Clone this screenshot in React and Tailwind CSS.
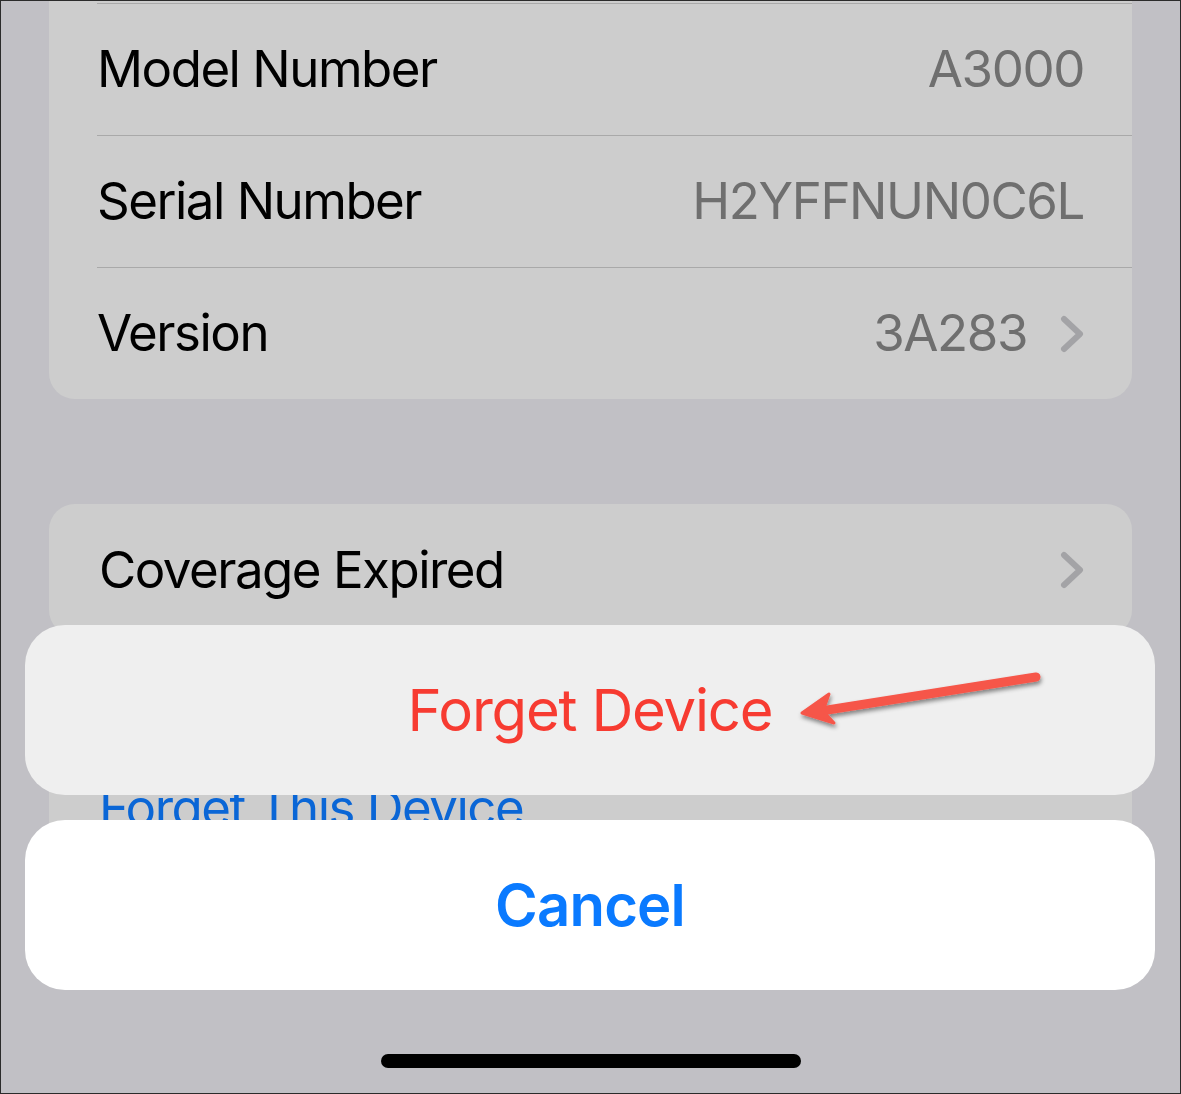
import React from 'react'

const font = { fontFamily: 'Inter, "Noto Sans", sans-serif' }

const Chevron = () => (
  <svg width="24" height="38" viewBox="0 0 24 38" className="shrink-0">
    <polyline
      points="4,4 20,19 4,34"
      fill="none"
      stroke="#a3a3a6"
      strokeWidth="6"
      strokeLinecap="round"
      strokeLinejoin="round"
    />
  </svg>
)

const InfoRow = ({ label, value, chevron }) => (
  <div className="ml-[48px] h-[132px] border-t border-[#a9a9a9] flex items-center justify-between pr-[48px]">
    <span className="text-[51px] text-black tracking-[-1.5px]">{label}</span>
    <div className="flex items-center gap-[33px]">
      {value && <span className="text-[51px] text-[#6f6f6f] tracking-[-1.4px]">{value}</span>}
      {chevron && <Chevron />}
    </div>
  </div>
)

const Arrow = () => (
  <svg className="absolute left-0 top-0 pointer-events-none" width="1181" height="1094">
    <defs>
      <filter id="arrowShadow" x="-10%" y="-50%" width="120%" height="200%">
        <feDropShadow dx="1" dy="3" stdDeviation="2" floodColor="#000" floodOpacity="0.45" />
      </filter>
    </defs>
    <g filter="url(#arrowShadow)" fill="#f6564a" stroke="#f6564a" strokeLinecap="round" strokeLinejoin="round">
      <line x1="1035" y1="676" x2="820" y2="710" strokeWidth="9" />
      <polygon points="801,712 828,693 822,710 833,722" strokeWidth="3" />
    </g>
  </svg>
)

export default function App() {
  return (
    <div
      className="relative w-[1181px] h-[1094px] overflow-hidden bg-[#c1c0c5] border border-[#2b2b2b] flex flex-col"
      style={font}
    >
      {/* device details group, scrolled past its top */}
      <div className="mx-[48px] bg-[#cdcdcd] rounded-b-[26px] pt-[2px] shrink-0">
        <InfoRow label="Model Number" value="A3000" />
        <InfoRow label="Serial Number" value="H2YFFNUN0C6L" />
        <InfoRow label="Version" value="3A283" chevron />
      </div>

      <div className="mt-[105px] mx-[48px] bg-[#cdcdcd] rounded-[26px] h-[132px] flex items-center justify-between pl-[50px] pr-[48px] shrink-0">
        <span className="text-[51px] text-black tracking-[-1.5px]">Coverage Expired</span>
        <Chevron />
      </div>

      <div className="mt-[106px] mx-[48px] bg-[#cdcdcd] rounded-[26px] h-[132px] flex items-center pl-[50px] shrink-0">
        <span className="text-[51px] text-[#0a66d6] tracking-[-1.5px]">Forget This Device</span>
      </div>

      {/* action sheet */}
      <div className="absolute left-[24px] top-[624px] w-[1130px] flex flex-col gap-[25px]">
        <div className="h-[170px] rounded-[40px] bg-[#efefef] flex items-center justify-center">
          <span className="text-[58px] text-[#f73b31] tracking-[-1.2px]">Forget Device</span>
        </div>
        <div className="h-[170px] rounded-[40px] bg-white flex items-center justify-center">
          <span className="text-[58px] font-semibold text-[#0a7aff] tracking-[-0.8px]">Cancel</span>
        </div>
      </div>

      <Arrow />

      {/* home indicator */}
      <div className="absolute left-[380px] top-[1053px] w-[420px] h-[14px] rounded-full bg-black" />
    </div>
  )
}
